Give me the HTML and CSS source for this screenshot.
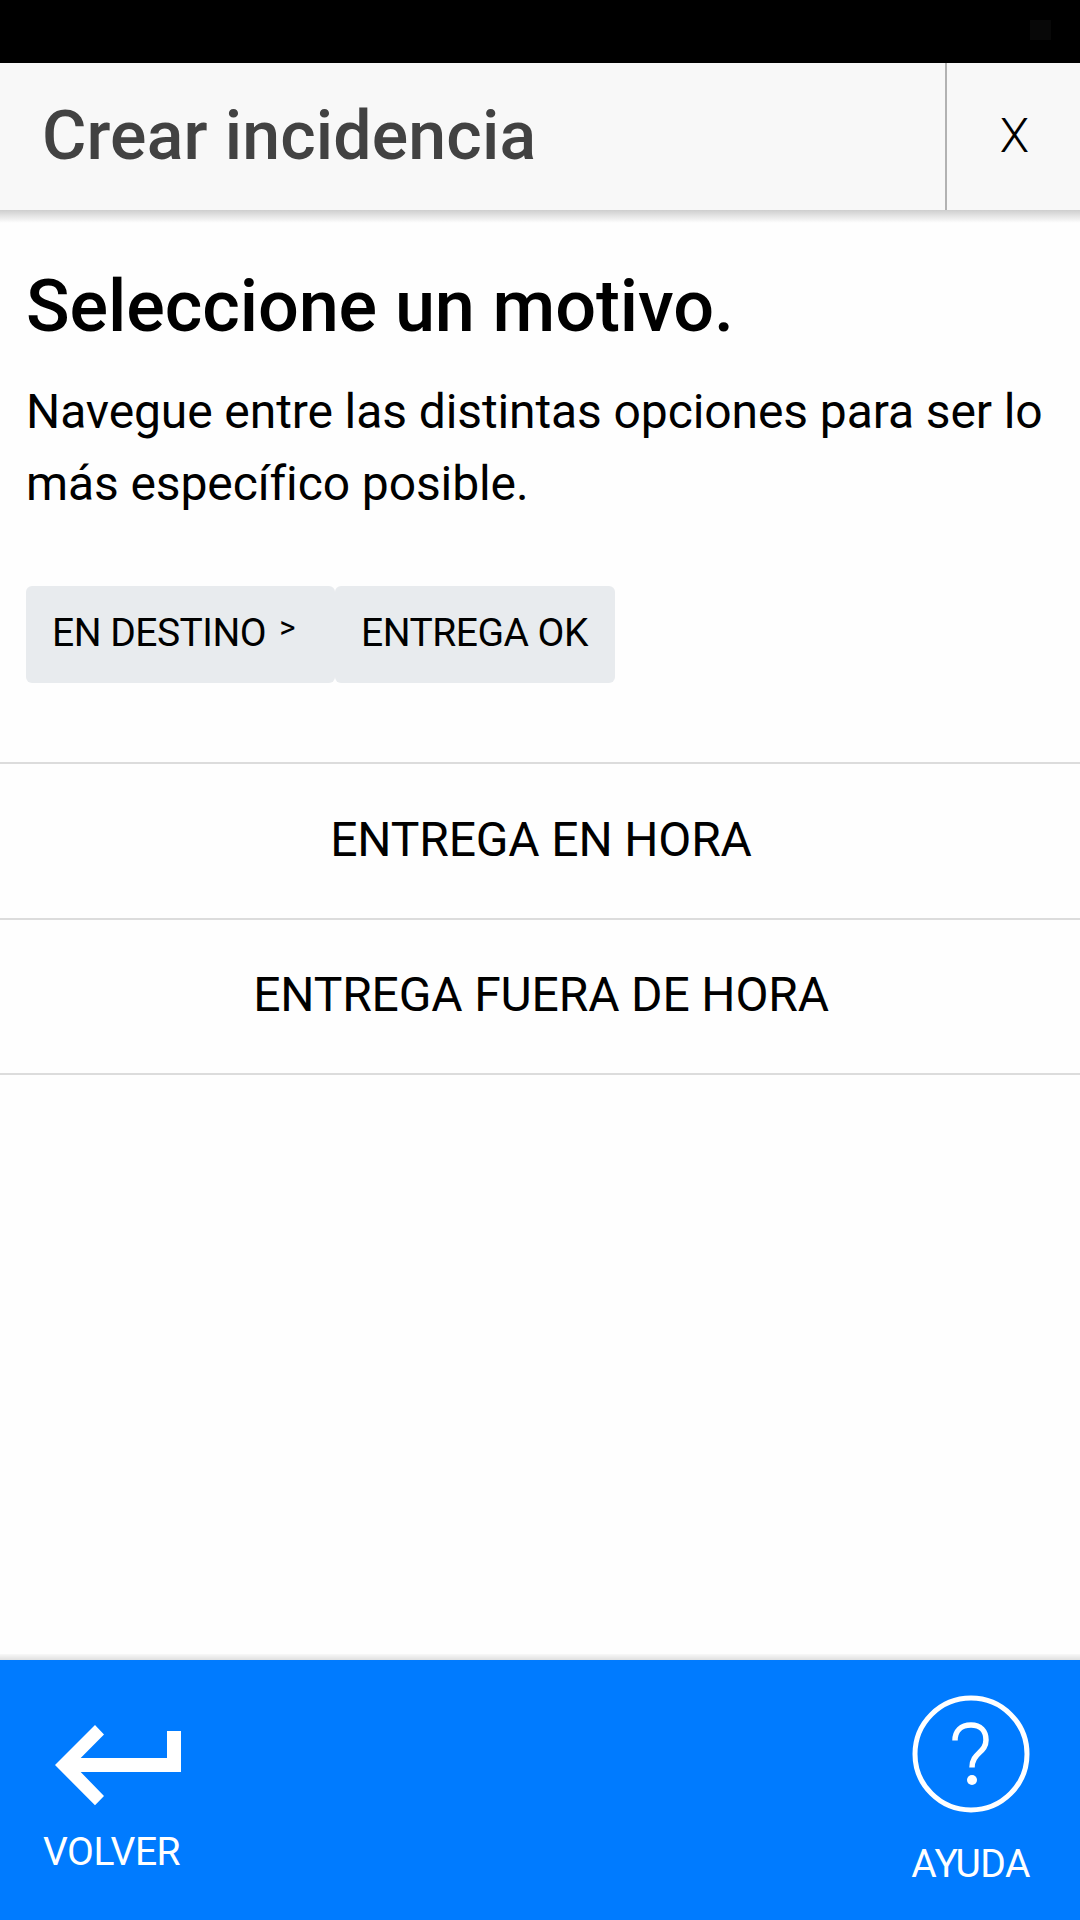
FILE: index.html
```html
<!DOCTYPE html>
<html lang="es">
<head>
  <meta charset="UTF-8">
  <meta name="viewport" content="width=device-width, initial-scale=1.0">
  <title>Crear incidencia</title>
  <link rel="stylesheet" href="styles.css">
</head>
<body>
  <div class="status-bar">
    <span class="status-icon"></span>
  </div>

  <header class="header">
    <h1 class="header-title">Crear incidencia</h1>
    <button class="close-btn" aria-label="Cerrar">X</button>
  </header>

  <main class="content">
    <section class="intro">
      <h2>Seleccione un motivo.</h2>
      <p>Navegue entre las distintas opciones para ser lo más específico posible.</p>
    </section>

    <nav class="breadcrumb">
      <button class="crumb">EN DESTINO <span class="crumb-arrow">&gt;</span></button>
      <button class="crumb">ENTREGA OK</button>
    </nav>

    <ul class="options">
      <li>ENTREGA EN HORA</li>
      <li>ENTREGA FUERA DE HORA</li>
    </ul>
  </main>

  <footer class="footer">
    <button class="footer-btn back">
      <svg width="126" height="82" viewBox="0 0 126 82">
        <path fill="#fff" d="M0 41 L40 1 L49 10.5 L25.7 34 H112 V7 H126 V48 H25.7 L49 72 L40 81.3 Z"/>
      </svg>
      <span>VOLVER</span>
    </button>
    <button class="footer-btn help">
      <svg width="118" height="118" viewBox="0 0 118 118" fill="none" stroke="#fff" stroke-width="5">
        <circle cx="59" cy="59" r="56"/>
        <path stroke-width="5.5" d="M43 45.5 C43 36 49 30 59 30 C68.5 30 74 36 74 45 C74 58 60 57.5 60 72.5"/>
        <circle cx="60" cy="85" r="5" fill="#fff" stroke="none"/>
      </svg>
      <span>AYUDA</span>
    </button>
  </footer>
</body>
</html>
```

FILE: styles.css
```css
* {
  box-sizing: border-box;
}

body {
  margin: 0;
  height: 100vh;
  display: flex;
  flex-direction: column;
  overflow: hidden;
  font-family: Roboto, "Liberation Sans", sans-serif;
  color: #000;
  background: #fefefe;
}

button {
  margin: 0;
  padding: 0;
  border: none;
  background: none;
  font: inherit;
  letter-spacing: inherit;
  color: inherit;
  cursor: pointer;
}

.status-bar {
  flex: none;
  display: flex;
  justify-content: flex-end;
  height: 63px;
  padding: 20px 29px 0 0;
  background: #000;
}

.status-icon {
  width: 21px;
  height: 20px;
  background: #080808;
}

.header {
  position: relative;
  flex: none;
  display: flex;
  height: 147px;
  background: #f8f8f8;
}

/* soft shadow under the header */
.header::after {
  content: "";
  position: absolute;
  top: 100%;
  left: 0;
  right: 0;
  height: 13px;
  background: linear-gradient(#cecece, #e4e4e4 45%, #fefefe);
}

.header-title {
  flex: 1;
  margin: 0;
  padding-left: 42px;
  font-size: 68px;
  font-weight: 500;
  line-height: 147px;
  letter-spacing: 0.15px;
  color: #424242;
}

.close-btn {
  width: 135px;
  padding: 0 0 2px 2px;
  border-left: 2px solid #b2b2b2;
  font-size: 48px;
  font-weight: 300;
}

.content {
  flex: 1;
}

.intro {
  padding: 49px 26px 0;
}

.intro h2 {
  margin: 0;
  font-size: 72px;
  font-weight: 500;
  line-height: 96px;
  letter-spacing: -0.1px;
}

.intro p {
  margin: 21px 0 0;
  font-size: 48px;
  line-height: 72px;
  letter-spacing: -0.1px;
}

.breadcrumb {
  display: flex;
  padding: 66px 26px 0;
}

.crumb {
  height: 97px;
  padding: 0 27px 4px 26px;
  border-radius: 6px;
  background: #e8ebee;
  font-size: 39px;
  letter-spacing: -0.5px;
}

.crumb-arrow {
  margin: 0 13px 0 4px;
  font-size: 31px;
  vertical-align: 8px;
}

.options {
  margin: 79px 0 0;
  padding: 0;
  list-style: none;
  border-top: 2px solid #dcdcdc;
}

.options li {
  height: 155px;
  padding-left: 2px;
  border-bottom: 2px solid #dcdcdc;
  font-size: 48px;
  line-height: 150px;
  letter-spacing: -0.15px;
  text-align: center;
}

.options li:first-child {
  height: 156px;
  line-height: 151px;
}

.footer {
  position: relative;
  flex: none;
  display: flex;
  justify-content: space-between;
  height: 260px;
  padding: 0 50px 0 43px;
  background: #007bff;
  color: #fff;
  font-size: 39px;
  line-height: 48px;
  letter-spacing: -0.5px;
}

.footer::before {
  content: "";
  position: absolute;
  bottom: 100%;
  left: 0;
  right: 0;
  height: 6px;
  background: linear-gradient(#f8f8f8, #e0e0e0);
}

.footer-btn {
  display: flex;
  flex-direction: column;
  align-items: flex-end;
}

.back {
  padding-top: 64px;
}

.back svg {
  margin-right: -1px;
}

.back span {
  margin-top: 22px;
}

.help {
  padding-top: 35px;
  align-items: center;
}

.help span {
  margin-top: 27px;
}
```
